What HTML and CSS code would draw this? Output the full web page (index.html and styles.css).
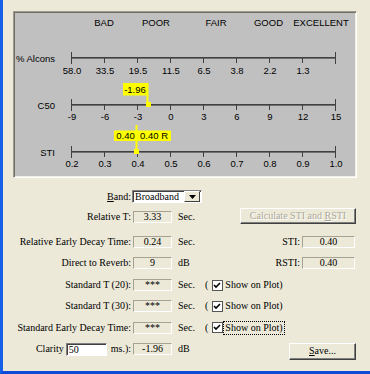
FILE: index.html
```html
<!DOCTYPE html>
<html lang="en">
<head>
    <meta charset="UTF-8">
    <title>STI</title>
    <link rel="stylesheet" href="styles.css">
</head>
<body>
    <div class="window">
        <!-- Graf hodnot -->
        <div class="plot">
            <svg class="chart" width="340" height="163" viewBox="15 13 340 163">
                <g class="cat" text-anchor="middle">
                    <text x="104" y="25.5">BAD</text>
                    <text x="156" y="25.5">POOR</text>
                    <text x="216" y="25.5">FAIR</text>
                    <text x="268.5" y="25.5">GOOD</text>
                    <text x="321" y="25.5">EXCELLENT</text>
                </g>
                <g class="name" text-anchor="end">
                    <text x="55" y="61.5">% Alcons</text>
                    <text x="55" y="108.5">C50</text>
                    <text x="55" y="155.5">STI</text>
                </g>

                <!-- osy -->
                <g class="axis">
                    <line class="dark" x1="71.5" y1="57.5" x2="335.5" y2="57.5"/>
                    <line class="mid" x1="71.5" y1="58.5" x2="335.5" y2="58.5"/>
                    <path d="M71.5 52V64M104.5 58V63M137.5 58V63M170.5 58V63M203.5 58V63M236.5 58V63M269.5 58V63M302.5 58V63M335.5 52V64"/>

                    <line class="dark" x1="71.5" y1="104.5" x2="335.5" y2="104.5"/>
                    <line class="mid" x1="71.5" y1="105.5" x2="335.5" y2="105.5"/>
                    <path d="M71.5 99V111M104.5 105V110M137.5 105V110M170.5 105V110M203.5 105V110M236.5 105V110M269.5 105V110M302.5 105V110M335.5 99V111"/>

                    <line class="dark" x1="71.5" y1="151.5" x2="335.5" y2="151.5"/>
                    <line class="mid" x1="71.5" y1="152.5" x2="335.5" y2="152.5"/>
                    <path d="M71.5 146V158M104.5 152V157M137.5 152V157M170.5 152V157M203.5 152V157M236.5 152V157M269.5 152V157M302.5 152V157M335.5 146V158"/>
                </g>

                <g class="ticks" text-anchor="middle">
                    <text x="72" y="73.5">58.0</text>
                    <text x="105" y="73.5">33.5</text>
                    <text x="138" y="73.5">19.5</text>
                    <text x="171" y="73.5">11.5</text>
                    <text x="204" y="73.5">6.5</text>
                    <text x="237" y="73.5">3.8</text>
                    <text x="270" y="73.5">2.2</text>
                    <text x="303" y="73.5">1.3</text>

                    <text x="72" y="120">-9</text>
                    <text x="105" y="120">-6</text>
                    <text x="138" y="120">-3</text>
                    <text x="171" y="120">0</text>
                    <text x="204" y="120">3</text>
                    <text x="237" y="120">6</text>
                    <text x="270" y="120">9</text>
                    <text x="303" y="120">12</text>
                    <text x="336" y="120">15</text>

                    <text x="72" y="167">0.2</text>
                    <text x="105" y="167">0.3</text>
                    <text x="138" y="167">0.4</text>
                    <text x="171" y="167">0.5</text>
                    <text x="204" y="167">0.6</text>
                    <text x="237" y="167">0.7</text>
                    <text x="270" y="167">0.8</text>
                    <text x="303" y="167">0.9</text>
                    <text x="336" y="167">1.0</text>
                </g>

                <!-- znacky -->
                <g class="marker">
                    <rect x="123" y="83" width="24" height="12.5"/>
                    <rect x="146.5" y="83" width="2" height="22"/>
                    <rect x="146" y="102" width="5" height="5"/>

                    <rect x="114" y="130.5" width="57" height="10.5"/>
                    <rect x="135.5" y="125" width="2" height="27"/>
                    <rect x="134" y="149" width="5" height="5"/>
                </g>
                <g class="marker-text" text-anchor="middle">
                    <text x="135" y="92.5">-1.96</text>
                    <text x="125.5" y="139">0.40</text>
                    <text x="154" y="139">0.40 R</text>
                </g>
            </svg>
        </div>

        <!-- Hodnoty -->
        <div class="form">
            <div class="row">
                <span class="lbl band-lbl"><u>B</u>and:</span>
                <div class="select">
                    <span class="select-text">Broadband</span>
                    <span class="select-btn">
                        <svg width="7" height="4" viewBox="0 0 7 4"><path d="M0 0H7L3.5 4Z" fill="#000"/></svg>
                    </span>
                </div>
            </div>
            <div class="row">
                <span class="lbl">Relative T:</span>
                <span class="val">3.33</span>
                <span class="unit">Sec.</span>
                <div class="right">
                    <span class="btn btn-calc">Calculate STI and <u>R</u>STI</span>
                </div>
            </div>
            <div class="row">
                <span class="lbl">Relative Early Decay Time:</span>
                <span class="val">0.24</span>
                <span class="unit">Sec.</span>
                <div class="right">
                    <span class="side-lbl">STI:</span>
                    <span class="val val-wide">0.40</span>
                </div>
            </div>
            <div class="row">
                <span class="lbl">Direct to Reverb:</span>
                <span class="val">9</span>
                <span class="unit">dB</span>
                <div class="right">
                    <span class="side-lbl">RSTI:</span>
                    <span class="val val-wide">0.40</span>
                </div>
            </div>
            <div class="row">
                <span class="lbl">Standard T (20):</span>
                <span class="val">***</span>
                <span class="unit">Sec.</span>
                <span class="paren">(</span>
                <span class="check"><svg width="9" height="9" viewBox="0 0 9 9"><path d="M1 4L3 6L7 2" fill="none" stroke="#000" stroke-width="1.6"/></svg></span>
                <span class="check-lbl">Show on Plot)</span>
            </div>
            <div class="row">
                <span class="lbl">Standard T (30):</span>
                <span class="val">***</span>
                <span class="unit">Sec.</span>
                <span class="paren">(</span>
                <span class="check"><svg width="9" height="9" viewBox="0 0 9 9"><path d="M1 4L3 6L7 2" fill="none" stroke="#000" stroke-width="1.6"/></svg></span>
                <span class="check-lbl">Show on Plot)</span>
            </div>
            <div class="row">
                <span class="lbl">Standard Early Decay Time:</span>
                <span class="val">***</span>
                <span class="unit">Sec.</span>
                <span class="paren">(</span>
                <span class="check"><svg width="9" height="9" viewBox="0 0 9 9"><path d="M1 4L3 6L7 2" fill="none" stroke="#000" stroke-width="1.6"/></svg></span>
                <span class="check-lbl focus">Show on Plot)</span>
            </div>
            <div class="row">
                <span class="lbl lbl-clarity">Clarity <span class="input">50</span> ms.):</span>
                <span class="val">-1.96</span>
                <span class="unit">dB</span>
                <div class="right">
                    <span class="btn btn-save"><u>S</u>ave...</span>
                </div>
            </div>
        </div>
    </div>
</body>
</html>
```

FILE: styles.css
```css
html, body {
    margin: 0;
    padding: 0;
}
body {
    background: #ece9d8;
    font-family: "Liberation Serif", "Times New Roman", serif;
    font-size: 10px;
    color: #000;
}
.window {
    width: 370px;
    height: 374px;
    box-sizing: border-box;
    border-left: 3px solid #1660e8;
    border-bottom: 3px solid #0b4bd6;
    background: #ece9d8;
    overflow: hidden;
}
/* Graf */
.plot {
    margin: 11px 0 0 10px;
    width: 344px;
    height: 167px;
    box-sizing: border-box;
    padding: 1px;
    border: 1px solid;
    border-color: #9d9b8f #fff #fff #9d9b8f;
    box-shadow: inset 1px 1px #716f64, inset -1px -1px #f1efe2;
    background: #c0c0c0;
}
.chart {
    display: block;
}
.chart text {
    font-family: "Liberation Sans", Arial, sans-serif;
    font-size: 9.5px;
    fill: #000;
}
.axis line.dark {
    stroke: #404040;
}
.axis line.mid {
    stroke: #707070;
}
.axis path {
    stroke: #404040;
    fill: none;
}
.marker rect {
    fill: #ffff00;
}
/* Formular */
.form {
    display: grid;
    grid-template-rows: 21px 24.5px 21px 22.5px 21px 21.5px 21px 17px;
    margin-top: 12px;
    padding-right: 14px;
}
.row {
    display: flex;
    align-items: flex-start;
    line-height: 12px;
    white-space: nowrap;
}
.lbl {
    width: 128px;
    flex-shrink: 0;
    text-align: right;
}
.band-lbl {
    line-height: 13px;
}
.select {
    display: flex;
    align-items: center;
    margin-left: 1px;
    width: 70px;
    height: 13px;
    box-sizing: border-box;
    border: 1px solid;
    border-color: #808080 #fff #fff #808080;
    box-shadow: inset 1px 1px #404040;
    background: #fff;
}
.select-text {
    flex: 1;
    padding-left: 2px;
    line-height: 11px;
}
.select-btn {
    display: flex;
    align-items: center;
    justify-content: center;
    width: 14px;
    height: 9px;
    margin-right: 1px;
    border: 1px solid;
    border-color: #fff #404040 #404040 #fff;
    background: #ece9d8;
}
.val {
    width: 39px;
    height: 12px;
    margin-left: 2px;
    box-sizing: border-box;
    border: 1px solid;
    border-color: #a6a293 #fff #fff #a6a293;
    text-align: center;
    line-height: 10px;
}
.val-wide {
    width: 53px;
    margin-right: 1px;
}
.unit {
    width: 27px;
    margin-left: 6px;
}
.right {
    display: flex;
    align-items: flex-start;
    margin-left: auto;
}
.side-lbl {
    margin-right: 0;
}
.paren {
    margin-right: 4px;
}
.check {
    display: flex;
    align-items: center;
    justify-content: center;
    width: 11px;
    height: 11px;
    margin-top: 0.5px;
    box-sizing: border-box;
    border: 1px solid #555;
    background: #fff;
}
.check-lbl {
    margin-left: 1px;
    padding: 0 1px;
}
.focus {
    outline: 1px dotted #000;
    outline-offset: 0;
}
.lbl-clarity {
    display: flex;
    justify-content: flex-end;
    align-items: center;
}
.input {
    display: block;
    width: 41px;
    height: 13px;
    margin: 0 4px 0 2px;
    box-sizing: border-box;
    padding-left: 2px;
    border: 1px solid;
    border-color: #808080 #fff #fff #808080;
    box-shadow: inset 1px 1px #404040;
    background: #fff;
    text-align: left;
    line-height: 11px;
}
/* Tlacitka */
.btn {
    display: block;
    box-sizing: border-box;
    border: 1px solid;
    border-color: #fff #404040 #404040 #fff;
    box-shadow: inset -1px -1px #808080;
    background: #ece9d8;
    text-align: center;
}
.btn-calc {
    width: 116px;
    height: 16px;
    margin-top: -3px;
    line-height: 13px;
    color: #aca899;
    text-shadow: 1px 1px #fff;
}
.btn-save {
    width: 67px;
    height: 17px;
    line-height: 14px;
}
```
